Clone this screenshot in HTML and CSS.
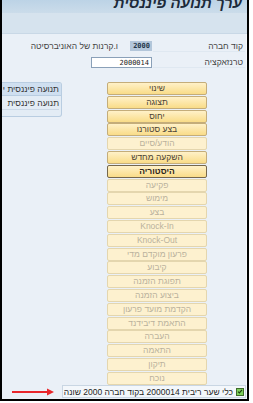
FILE: index.html
```
<!DOCTYPE html>
<html lang="he">
<head>
    <meta charset="UTF-8">
    <title>ערך תנועה פיננסית</title>
    <link rel="stylesheet" href="styles.css">
</head>
<body>
    <div class="window">
        <div class="titlebar">
            <span class="title">ערך תנועה פיננסית</span>
        </div>
        <div class="toolbar"></div>

        <div class="form">
            <div class="form-row">
                <span class="label">קוד חברה</span>
                <span class="field field-key">2000</span>
                <span class="desc">ו.קרנות של האוניברסיטה</span>
            </div>
            <div class="form-row">
                <span class="label">טרנזאקציה</span>
                <span class="field field-input">2000014</span>
            </div>
        </div>

        <div class="main">
            <div class="side-panel">
                <div class="side-item selected">תנועה פיננסית י</div>
                <div class="side-item">תנועה פיננסית</div>
            </div>

            <div class="buttons">
                <button class="act">שינוי</button>
                <button class="act">תצוגה</button>
                <button class="act">יחוס</button>
                <button class="act">בצע סטורנו</button>
                <button class="act" disabled>הודע/סיים</button>
                <button class="act">השקעה מחדש</button>
                <button class="act focused">היסטוריה</button>
                <button class="act" disabled>פקיעה</button>
                <button class="act" disabled>מימוש</button>
                <button class="act" disabled>בצע</button>
                <button class="act" disabled>Knock-In</button>
                <button class="act" disabled>Knock-Out</button>
                <button class="act" disabled>פרעון מוקדם מדי</button>
                <button class="act" disabled>קיבוע</button>
                <button class="act" disabled>תפוגת הזמנה</button>
                <button class="act" disabled>ביצוע הזמנה</button>
                <button class="act" disabled>הקדמת מועד פרעון</button>
                <button class="act" disabled>התאמת דיבידנד</button>
                <button class="act" disabled>העברה</button>
                <button class="act" disabled>התאמה</button>
                <button class="act" disabled>תיקון</button>
                <button class="act" disabled>נוכח</button>
            </div>
        </div>

        <div class="statusline">
            <svg class="arrow" width="44" height="8" viewBox="0 0 44 8">
                <line x1="1" y1="4" x2="38" y2="4" stroke="#e8262b" stroke-width="2"/>
                <polygon points="36,0.5 43,4 36,7.5" fill="#e8262b"/>
            </svg>
            <div class="status">
                <span class="check">
                    <svg width="7" height="7" viewBox="0 0 7 7">
                        <polyline points="1.2,3.6 2.8,5.2 5.8,1.6" fill="none" stroke="#1d3b12" stroke-width="1.3"/>
                    </svg>
                </span>
                <span class="status-text">כלי שער ריבית 2000014 בקוד חברה 2000 שונה</span>
            </div>
        </div>
    </div>
</body>
</html>
```

FILE: styles.css
```
body {
    margin: 0;
    background: #ffffff;
    font-family: "Liberation Sans", Arial, "DejaVu Sans", sans-serif;
    font-size: 8px;
    color: #2a2a2a;
}

.window {
    width: 245px;
    height: 399px;
    border: 2px solid #000;
    border-top: 0;
    background: #eaf0f7;
    box-shadow: inset -1px 0 0 #f6f9fc;
    overflow: hidden;
    display: flex;
    flex-direction: column;
}

.titlebar {
    height: 13px;
    overflow: hidden;
    background: linear-gradient(#bcd3e6, #cbdcea);
    direction: rtl;
    padding-right: 5px;
}

.title {
    display: block;
    margin-top: -6px;
    font-size: 15px;
    line-height: 17px;
    font-style: italic;
    font-weight: bold;
    color: #1c2a3a;
}

.toolbar {
    height: 20px;
    background: #d6e3ee;
    border-bottom: 1px solid #c9d8e6;
}

.form {
    padding-top: 5px;
    display: flex;
    flex-direction: column;
    gap: 2px;
}

.form-row {
    height: 14px;
    display: flex;
    direction: rtl;
    align-items: center;
}

.label {
    width: 92px;
    height: 12px;
    line-height: 12px;
    margin-right: 2px;
    padding-right: 2px;
    box-sizing: border-box;
    font-size: 8.5px;
    color: #444;
    border-bottom: 1px solid #dfe8f1;
}

.field {
    height: 10px;
    line-height: 10px;
    font-family: "DejaVu Sans Mono", "Liberation Mono", monospace;
    font-size: 7px;
    padding: 0 2px;
    box-sizing: border-box;
    direction: ltr;
    text-align: right;
}

.field-key {
    width: 22px;
    margin-right: 1px;
    background: #b3c6da;
    font-weight: bold;
    color: #24364a;
}

.field-input {
    width: 61px;
    height: 11px;
    margin-right: 1px;
    background: #fff;
    border: 1px solid #8aa0b8;
    color: #222;
}

.desc {
    margin-right: 12px;
    font-size: 8.5px;
    color: #444;
}

.main {
    display: flex;
    margin-top: 13px;
}

.side-panel {
    width: 62px;
    height: 35px;
    box-sizing: border-box;
    margin-left: -2px;
    border: 1px solid #b9cde1;
    border-left: 0;
    border-radius: 0 3px 3px 0;
    background: #e3ecf5;
    direction: rtl;
    overflow: hidden;
}

.side-item {
    height: 12px;
    line-height: 12px;
    padding-right: 2px;
    white-space: nowrap;
    font-size: 8.5px;
    color: #333;
}

.side-item.selected {
    background: #cfdff0;
    border-bottom: 1px solid #b9cde1;
}

.side-item + .side-item {
    border-bottom: 1px solid #cbd8e6;
    margin-right: 2px;
    padding-right: 0;
    height: 13px;
    line-height: 14px;
}

.buttons {
    margin-left: 45px;
    width: 100px;
    display: flex;
    flex-direction: column;
    gap: 0.8px;
}

.act {
    height: 13px;
    padding: 0;
    margin: 0;
    font-family: inherit;
    font-size: 8.5px;
    line-height: 11px;
    color: #4a4236;
    border: 1px solid #c4ad7a;
    border-radius: 2px;
    background: linear-gradient(#fff1c8, #f9dc88);
    direction: rtl;
    white-space: nowrap;
}

.act.focused {
    border-color: #75674c;
    font-weight: bold;
    color: #2a2418;
}

.act:disabled {
    color: #bab19d;
    border-color: #e4d6ae;
    background: #fdf1cf;
}

.statusline {
    display: flex;
    align-items: center;
    margin-top: auto;
    margin-bottom: 1px;
    height: 13px;
}

.arrow {
    margin-left: 9px;
    margin-right: 7px;
}

.status {
    width: 184px;
    height: 13px;
    box-sizing: border-box;
    border: 1px solid #c9d6e3;
    background: #f3f7fb;
    display: flex;
    direction: rtl;
    align-items: center;
    gap: 3px;
    padding-right: 1px;
}

.check {
    width: 8px;
    height: 8px;
    box-sizing: border-box;
    border: 1px solid #3f6b2c;
    background: #7ccf5a;
    display: flex;
    align-items: center;
    justify-content: center;
}

.check svg {
    display: block;
}

.status-text {
    font-size: 8.5px;
    color: #1f1f1f;
    white-space: nowrap;
}
```
